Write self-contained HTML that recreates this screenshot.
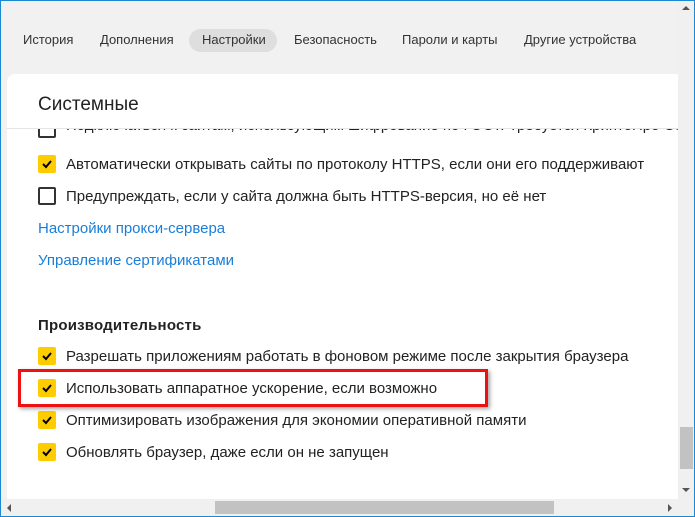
<!DOCTYPE html>
<html><head><meta charset="utf-8"><style>
*{margin:0;padding:0;box-sizing:border-box}
body{width:695px;height:517px;overflow:hidden;background:#fff;font-family:"Liberation Sans",sans-serif;position:relative}
.frame{position:absolute;left:0;top:0;width:695px;height:517px;border:1px solid #1c87d2;background:#f1f1f1;overflow:hidden}
.tab{position:absolute;top:31px;font-size:13px;color:#333;white-space:nowrap}
.pill{position:absolute;left:188px;top:28px;width:88px;height:23px;border-radius:12px;background:#dedede}
.panel{position:absolute;left:6px;top:73px;width:671px;height:425px;background:#fff;border-top-left-radius:8px;overflow:hidden}
.abs{position:absolute;white-space:nowrap}
.t{font-size:15px;color:#222;left:59px}
.cb{position:absolute;left:31px;width:18px;height:18px;border-radius:2px}
.on{background:#ffcc00}
.off{border:2px solid #333;background:#fff}
.cb svg{position:absolute;left:3px;top:3px}
.vs{position:absolute;left:677px;top:0;width:17px;height:498px;background:#f0f0f0}
.hs{position:absolute;left:0;top:498px;width:677px;height:17px;background:#f0f0f0}
</style></head><body><div class="frame">
<div class="pill"></div>
<div class="tab" style="left:22px">История</div>
<div class="tab" style="left:99px">Дополнения</div>
<div class="tab" style="left:201px">Настройки</div>
<div class="tab" style="left:293px">Безопасность</div>
<div class="tab" style="left:401px">Пароли и карты</div>
<div class="tab" style="left:523px">Другие устройства</div>
<div class="panel">
 <div class="abs" style="left:31px;top:20px;font-size:19px;color:#222">Системные</div>
 <div class="abs t" style="top:43px;clip-path:inset(12px 0 0 0)">Подключаться к сайтам, использующим шифрование по ГОСТ. Требуется КриптоПро CSP</div>
 <div class="cb off" style="top:46px;clip-path:inset(9px 0 0 0)"></div>
 <div style="position:absolute;left:0;top:54px;width:672px;height:1px;background:#e6e6e6"></div>
 <div class="cb on" style="top:81px"><svg width="12" height="12" viewBox="0 0 12 12"><path d="M2 6l3 3 5-6" stroke="#000" stroke-width="2" fill="none"/></svg></div>
 <div class="abs t" style="top:82px">Автоматически открывать сайты по протоколу HTTPS, если они его поддерживают</div>
 <div class="cb off" style="top:113px"></div>
 <div class="abs t" style="top:114px">Предупреждать, если у сайта должна быть HTTPS-версия, но её нет</div>
 <div class="abs" style="left:31px;top:146px;font-size:15px;color:#1a7ed8">Настройки прокси-сервера</div>
 <div class="abs" style="left:31px;top:178px;font-size:15px;color:#1a7ed8">Управление сертификатами</div>
 <div class="abs" style="left:31px;top:243px;font-size:15px;color:#222;font-weight:bold;letter-spacing:0.2px">Производительность</div>
 <div class="cb on" style="top:273px"><svg width="12" height="12" viewBox="0 0 12 12"><path d="M2 6l3 3 5-6" stroke="#000" stroke-width="2" fill="none"/></svg></div>
 <div class="abs t" style="top:274px">Разрешать приложениям работать в фоновом режиме после закрытия браузера</div>
 <div class="cb on" style="top:305px"><svg width="12" height="12" viewBox="0 0 12 12"><path d="M2 6l3 3 5-6" stroke="#000" stroke-width="2" fill="none"/></svg></div>
 <div class="abs t" style="top:306px">Использовать аппаратное ускорение, если возможно</div>
 <div class="cb on" style="top:337px"><svg width="12" height="12" viewBox="0 0 12 12"><path d="M2 6l3 3 5-6" stroke="#000" stroke-width="2" fill="none"/></svg></div>
 <div class="abs t" style="top:338px">Оптимизировать изображения для экономии оперативной памяти</div>
 <div class="cb on" style="top:369px"><svg width="12" height="12" viewBox="0 0 12 12"><path d="M2 6l3 3 5-6" stroke="#000" stroke-width="2" fill="none"/></svg></div>
 <div class="abs t" style="top:370px">Обновлять браузер, даже если он не запущен</div>
</div>
<div style="position:absolute;left:17px;top:368px;width:470px;height:38px;border:3px solid #ee1111;box-shadow:2px 2px 4px rgba(0,0,0,.35)"></div>
<div class="vs">
 <div style="position:absolute;left:4px;top:5px;width:0;height:0;border-left:4px solid transparent;border-right:4px solid transparent;border-bottom:4px solid #555"></div>
 <div style="position:absolute;left:2px;top:426px;width:13px;height:42px;background:#c2c2c2"></div>
 <div style="position:absolute;left:4px;top:487px;width:0;height:0;border-left:4px solid transparent;border-right:4px solid transparent;border-top:4px solid #555"></div>
</div>
<div class="hs">
 <div style="position:absolute;left:6px;top:5px;width:0;height:0;border-top:4px solid transparent;border-bottom:4px solid transparent;border-right:4px solid #555"></div>
 <div style="position:absolute;left:214px;top:2px;width:339px;height:13px;background:#c2c2c2"></div>
 <div style="position:absolute;left:667px;top:5px;width:0;height:0;border-top:4px solid transparent;border-bottom:4px solid transparent;border-left:4px solid #555"></div>
</div>
<div style="position:absolute;left:677px;top:498px;width:17px;height:17px;background:#f0f0f0"></div>
</div></body></html>
